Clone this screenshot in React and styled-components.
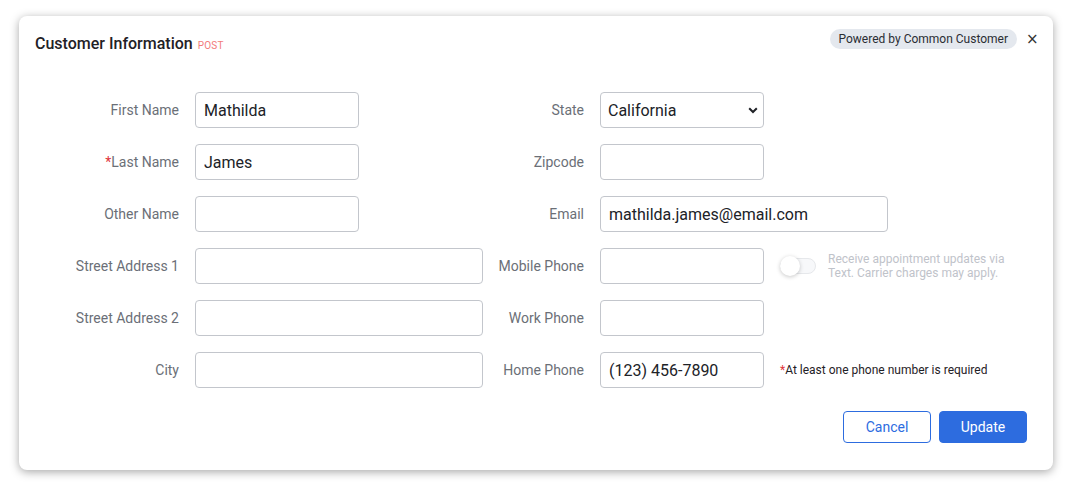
import React, { useState } from 'react';
import styled, { createGlobalStyle } from 'styled-components';

const GlobalStyle = createGlobalStyle`
  * { box-sizing: border-box; }
  body {
    margin: 0;
    padding: 16px 20px 24px 19px;
    background: #ffffff;
    font-family: Roboto, "Liberation Sans", Arial, sans-serif;
  }
`;

const Card = styled.div`
  width: 1034px;
  height: 454px;
  background: #ffffff;
  border-radius: 8px;
  box-shadow: 0 2px 10px rgba(0, 0, 0, 0.35);
  padding: 13px 26px 0 16px;
`;

const Header = styled.div`
  display: flex;
  justify-content: space-between;
  align-items: flex-start;
  margin-right: -9px;
`;

const Title = styled.h2`
  margin: 5px 0 0;
  font-size: 16px;
  line-height: 20px;
  font-weight: 500;
  color: #1f2126;
  display: flex;
  align-items: baseline;
  gap: 5px;
`;

const Method = styled.span`
  font-size: 10px;
  font-weight: 400;
  color: #f27b7b;
  letter-spacing: 0.2px;
`;

const HeaderRight = styled.div`
  display: flex;
  align-items: center;
  gap: 9px;
`;

const Badge = styled.span`
  height: 20px;
  padding: 0 9px;
  border-radius: 10px;
  background: #e4e8ee;
  color: #2a2d33;
  font-size: 12px;
  line-height: 20px;
`;

const Close = styled.button`
  border: none;
  background: none;
  padding: 0;
  width: 10px;
  font-size: 15px;
  line-height: 20px;
  color: #333;
  cursor: pointer;
  font-family: "DejaVu Sans", sans-serif;
`;

const Form = styled.div`
  display: grid;
  grid-template-columns: 144px 288px 85px 1fr;
  grid-auto-rows: 36px;
  column-gap: 16px;
  row-gap: 16px;
  margin-top: 36px;
`;

const Label = styled.label`
  display: flex;
  align-items: center;
  justify-content: flex-end;
  font-size: 14px;
  color: #6b6f77;
  white-space: nowrap;
`;

const Star = styled.span`
  color: #e0353b;
`;

const Input = styled.input`
  width: ${(p) => p.$w}px;
  height: 36px;
  border: 1px solid #c3c6cc;
  border-radius: 4px;
  padding: 0 8px;
  font-family: Roboto, "Liberation Sans", Arial, sans-serif;
  font-size: 16px;
  color: #202227;
  outline: none;
`;

const Cell = styled.div`
  display: flex;
  align-items: center;
`;

const SelectWrap = styled.div`
  position: relative;
  width: 164px;
  height: 36px;
`;

const Select = styled.select`
  appearance: none;
  width: 100%;
  height: 100%;
  border: 1px solid #c3c6cc;
  border-radius: 4px;
  padding: 0 7px;
  background: #fff;
  font-family: Roboto, "Liberation Sans", Arial, sans-serif;
  font-size: 16px;
  color: #202227;
  outline: none;
`;

const Chevron = styled.svg`
  position: absolute;
  right: 6px;
  top: 15px;
  pointer-events: none;
`;

const Toggle = styled.div`
  position: relative;
  width: 36px;
  height: 16px;
  margin-left: 16px;
  border-radius: 8px;
  border: 1px solid ${(p) => (p.$on ? '#a9c3f2' : '#e6e8eb')};
  background: ${(p) => (p.$on ? '#a9c3f2' : '#f7f8fa')};
  cursor: pointer;
  flex-shrink: 0;
`;

const Knob = styled.div`
  position: absolute;
  top: -3px;
  left: ${(p) => (p.$on ? '15px' : '-1px')};
  width: 20px;
  height: 20px;
  border-radius: 50%;
  background: ${(p) => (p.$on ? '#2d6cdf' : '#ffffff')};
  box-shadow: 0 1px 4px rgba(0, 0, 0, 0.22);
`;

const ToggleText = styled.div`
  margin-left: 12px;
  font-size: 12px;
  line-height: 14px;
  color: #bfc3ca;
  margin-top: -1px;
`;

const Helper = styled.div`
  margin-left: 16px;
  font-size: 12px;
  color: #1f2126;
`;

const Actions = styled.div`
  display: flex;
  justify-content: flex-end;
  gap: 8px;
  margin-top: 23px;
`;

const Button = styled.button`
  width: 88px;
  height: 32px;
  border-radius: 4px;
  border: 1px solid #2d6cdf;
  background: ${(p) => (p.$primary ? '#2d6cdf' : '#ffffff')};
  color: ${(p) => (p.$primary ? '#ffffff' : '#2d6cdf')};
  font-family: Roboto, "Liberation Sans", Arial, sans-serif;
  font-size: 14px;
  cursor: pointer;
`;

const App = () => {
  const [sms, setSms] = useState(false);

  return (
    <>
      <GlobalStyle />
      <Card>
        <Header>
          <Title>
            Customer Information <Method>POST</Method>
          </Title>
          <HeaderRight>
            <Badge>Powered by Common Customer</Badge>
            <Close aria-label="close">×</Close>
          </HeaderRight>
        </Header>

        <Form>
          <Label>First Name</Label>
          <Cell><Input $w={164} defaultValue="Mathilda" /></Cell>
          <Label>State</Label>
          <Cell>
            <SelectWrap>
              <Select defaultValue="California">
                <option>California</option>
                <option>Nevada</option>
                <option>Oregon</option>
              </Select>
              <Chevron width="10" height="7" viewBox="0 0 10 7">
                <polyline points="1.2,1.2 5,5 8.8,1.2" fill="none" stroke="#202227" strokeWidth="2" />
              </Chevron>
            </SelectWrap>
          </Cell>

          <Label><Star>*</Star>Last Name</Label>
          <Cell><Input $w={164} defaultValue="James" /></Cell>
          <Label>Zipcode</Label>
          <Cell><Input $w={164} /></Cell>

          <Label>Other Name</Label>
          <Cell><Input $w={164} /></Cell>
          <Label>Email</Label>
          <Cell><Input $w={288} defaultValue="mathilda.james@email.com" /></Cell>

          <Label>Street Address 1</Label>
          <Cell><Input $w={288} /></Cell>
          <Label>Mobile Phone</Label>
          <Cell>
            <Input $w={164} />
            <Toggle $on={sms} onClick={() => setSms(!sms)}>
              <Knob $on={sms} />
            </Toggle>
            <ToggleText>
              Receive appointment updates via
              <br />
              Text. Carrier charges may apply.
            </ToggleText>
          </Cell>

          <Label>Street Address 2</Label>
          <Cell><Input $w={288} /></Cell>
          <Label>Work Phone</Label>
          <Cell><Input $w={164} /></Cell>

          <Label>City</Label>
          <Cell><Input $w={288} /></Cell>
          <Label>Home Phone</Label>
          <Cell>
            <Input $w={164} defaultValue="(123) 456-7890" />
            <Helper><Star>*</Star>At least one phone number is required</Helper>
          </Cell>
        </Form>

        <Actions>
          <Button>Cancel</Button>
          <Button $primary>Update</Button>
        </Actions>
      </Card>
    </>
  );
};

export default App;
